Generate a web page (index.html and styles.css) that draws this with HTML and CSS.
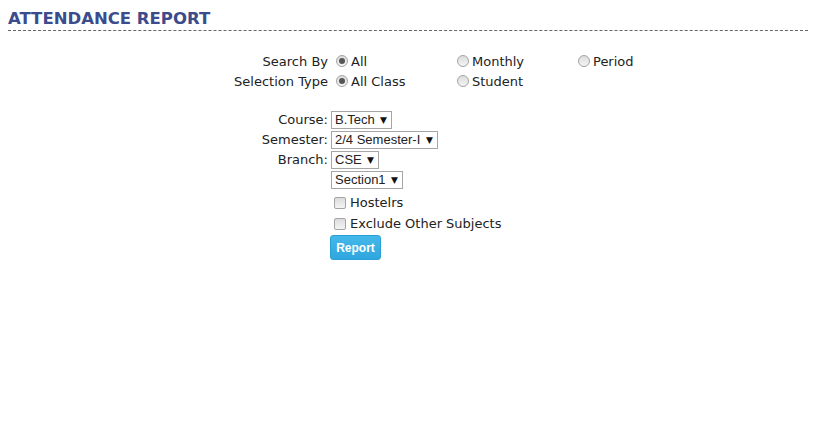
FILE: index.html
```html
<!DOCTYPE html>
<html>
<head>
<meta charset="utf-8">
<link rel="stylesheet" href="styles.css">
</head>
<body>
<h1 class="title">ATTENDANCE REPORT</h1>
<form class="report">
  <div class="radio-grid">
    <span class="label">Search By</span>
    <label class="opt"><input type="radio" name="by" checked><span>All</span></label>
    <label class="opt"><input type="radio" name="by"><span>Monthly</span></label>
    <label class="opt"><input type="radio" name="by"><span>Period</span></label>
    <span class="label">Selection Type</span>
    <label class="opt"><input type="radio" name="sel" checked><span>All Class</span></label>
    <label class="opt"><input type="radio" name="sel"><span>Student</span></label>
    <span></span>
  </div>
  <div class="field-grid">
    <span class="label">Course:</span>
    <span class="sel"><select><option>B.Tech</option></select></span>
    <span class="label">Semester:</span>
    <span class="sel"><select><option>2/4 Semester-I</option></select></span>
    <span class="label">Branch:</span>
    <span class="sel"><select><option>CSE</option></select></span>
    <span></span>
    <span class="sel"><select><option>Section1</option></select></span>
  </div>
  <div class="check-list">
    <label class="chk"><input type="checkbox"><span>Hostelrs</span></label>
    <label class="chk"><input type="checkbox"><span>Exclude Other Subjects</span></label>
    <button type="button" class="btn">Report</button>
  </div>
</form>
</body>
</html>
```
FILE: styles.css
```css
html, body { background: #fff; }
body {
  margin: 8px;
  font-family: "DejaVu Sans", Verdana, sans-serif;
  font-size: 13px;
  color: #222;
}
.title {
  margin: 0 -4px 0 0;
  padding-top: 1px;
  font-size: 16.5px;
  font-weight: bold;
  color: #3c4b8c;
  line-height: 20px;
  border-bottom: 1px dashed #666;
  padding-bottom: 1px;
}
.report {
  margin-top: 20px;
}
.radio-grid {
  display: grid;
  grid-template-columns: 320px 121px 121px 121px;
  grid-auto-rows: 20px;
  align-items: center;
}
.label {
  text-align: right;
  white-space: nowrap;
}
.opt, .chk {
  display: flex;
  align-items: center;
  white-space: nowrap;
}
.opt input {
  margin: 0 3px 0 8px;
}
input[type=radio], input[type=checkbox] {
  appearance: none;
  -webkit-appearance: none;
  width: 12px;
  height: 12px;
  box-sizing: border-box;
  border: 1px solid #a4a4a4;
  background: linear-gradient(#dcdcdc, #f4f4f4);
  flex: none;
  position: relative;
}
input[type=radio] { border-radius: 50%; }
input[type=radio]:checked::after {
  content: "";
  position: absolute;
  left: 2px; top: 2px;
  width: 6px; height: 6px;
  border-radius: 50%;
  background: #555;
}
input[type=checkbox] {
  border-radius: 2px;
  margin: 0 4px 0 6px;
}
.field-grid {
  margin-top: 20px;
  display: grid;
  grid-template-columns: 320px auto;
  column-gap: 3px;
  row-gap: 2px;
  justify-content: start;
  align-items: center;
}
.field-grid .label { line-height: 18px; }
.sel {
  position: relative;
  display: inline-block;
  justify-self: start;
}
.sel select {
  appearance: none;
  -webkit-appearance: none;
  font-family: "Liberation Sans", Arial, sans-serif;
  font-size: 13px;
  color: #222;
  height: 18px;
  box-sizing: border-box;
  border: 1px solid #a6a6a6;
  border-radius: 0;
  background: #fff;
  padding: 0 16px 0 3px;
  line-height: 16px;
}
.sel::after {
  content: "▼";
  position: absolute;
  right: 5px;
  top: 3px;
  font-size: 9px;
  line-height: 12px;
  color: #111;
  pointer-events: none;
}
.check-list {
  margin-top: 3px;
  padding-left: 320px;
  display: flex;
  flex-direction: column;
  align-items: flex-start;
}
.chk { height: 21px; }
.btn {
  margin-top: 1px;
  margin-left: 2px;
  width: 51px;
  height: 25px;
  border: 1px solid #2aa0d6;
  border-radius: 3px;
  background: linear-gradient(#45b8ea, #2ea7de);
  color: #fff;
  font-family: "Liberation Sans", Arial, sans-serif;
  font-weight: bold;
  font-size: 12px;
  padding: 0;
}
```
